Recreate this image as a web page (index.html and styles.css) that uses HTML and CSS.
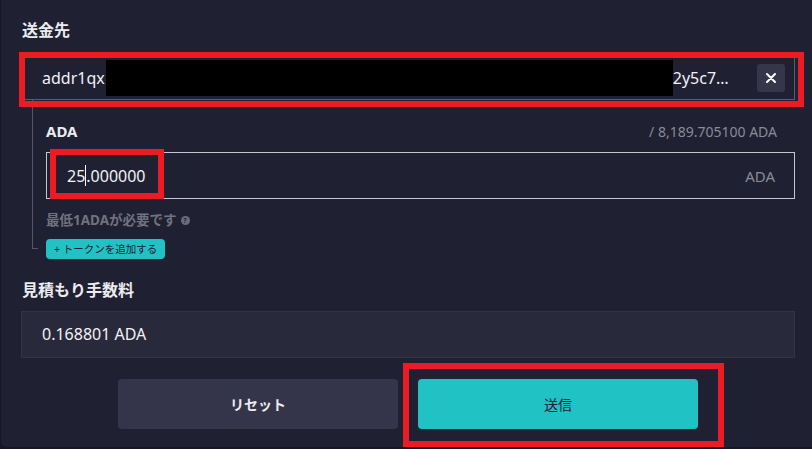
FILE: index.html
```html
<!DOCTYPE html>
<html lang="ja">
<head>
    <meta charset="UTF-8">
    <meta name="viewport" content="width=device-width, initial-scale=1.0">
    <title>送金</title>
    <link rel="stylesheet" href="styles.css">
</head>
<body>

<div class="card">
    <div class="field-label">送金先</div>
    <div class="address-input">
        <div class="address-text">addr1qx<span class="redacted"></span>2y5c7…</div>
        <button class="clear-btn" type="button">
            <svg width="10" height="10" viewBox="0 0 10 10"><path d="M1 1 L9 9 M9 1 L1 9" stroke="#fff" stroke-width="2" stroke-linecap="round"/></svg>
        </button>
    </div>

    <div class="branch">
        <div class="asset-head">
            <span class="asset-name">ADA</span>
            <span class="asset-balance">/ 8,189.705100 ADA</span>
        </div>
        <div class="amount-input">
            <span class="amount-value">25<span class="caret"></span>.000000</span>
            <span class="amount-unit">ADA</span>
        </div>
        <div class="hint">最低1ADAが必要です <span class="help">?</span></div>
        <button class="add-token" type="button">+ トークンを追加する</button>
    </div>

    <div class="field-label fee-label">見積もり手数料</div>
    <div class="fee-box">0.168801 ADA</div>

    <div class="actions">
        <button class="btn btn-reset" type="button">リセット</button>
        <button class="btn btn-send" type="button">送信</button>
    </div>

    <!-- red annotation boxes -->
    <div class="mark mark-address"></div>
    <div class="mark mark-amount"></div>
    <div class="mark mark-send"></div>
</div>

</body>
</html>
```

FILE: styles.css
```css
body {
    margin: 0;
    background-color: #171826;
    font-family: "Noto Sans", "Noto Sans CJK JP", sans-serif;
    color: #ececf0;
}
.card {
    position: relative;
    box-sizing: border-box;
    width: 812px;
    height: 448px;
    padding: 20px 17px 0 20px;
    background-color: #1f2031;
    border-left: 1px solid #171826;
    border-bottom: 1px solid #171826;
    border-bottom-left-radius: 6px;
}
.field-label {
    font-size: 16px;
    font-weight: bold;
    line-height: 20px;
    padding-left: 1px;
}
.address-input {
    display: flex;
    align-items: center;
    justify-content: space-between;
    box-sizing: border-box;
    height: 44px;
    margin-top: 16px;
    padding: 0 9px 0 20px;
    border: 1px solid #5c5d6c;
}
.address-text {
    display: flex;
    align-items: center;
    font-size: 16px;
    color: #f2f2f5;
}
.redacted {
    display: inline-block;
    width: 567px;
    height: 36px;
    margin-left: 1px;
    background-color: #000;
}
.clear-btn {
    display: flex;
    align-items: center;
    justify-content: center;
    width: 28px;
    height: 28px;
    padding: 0;
    border: none;
    border-radius: 3px;
    background-color: #35364a;
}
.branch {
    position: relative;
    margin-left: 11px;
    padding: 21px 0 0 14px;
}
.branch::before {
    content: "";
    position: absolute;
    left: 0;
    top: 0;
    bottom: 10px;
    width: 5px;
    border-left: 1px solid #55566a;
    border-bottom: 1px solid #55566a;
}
.asset-head {
    display: flex;
    justify-content: space-between;
    align-items: center;
    height: 20px;
    padding-right: 18px;
}
.asset-name {
    font-size: 15px;
    font-weight: bold;
}
.asset-balance {
    font-size: 14px;
    color: #8a8b98;
}
.amount-input {
    display: flex;
    justify-content: space-between;
    align-items: center;
    box-sizing: border-box;
    height: 47px;
    margin-top: 11px;
    padding: 0 19px 0 20px;
    border: 1px solid #c6c6cc;
}
.amount-value {
    display: flex;
    align-items: center;
    font-size: 16px;
    color: #f2f2f5;
}
.caret {
    display: inline-block;
    width: 1px;
    height: 21px;
    background-color: #fff;
}
.amount-unit {
    font-size: 15px;
    color: #8a8b98;
}
.hint {
    display: flex;
    align-items: center;
    gap: 4px;
    margin-top: 12px;
    font-size: 13.5px;
    font-weight: bold;
    line-height: 18px;
    color: #71727f;
}
.help {
    display: inline-flex;
    align-items: center;
    justify-content: center;
    width: 9px;
    height: 9px;
    border-radius: 50%;
    background-color: #6c6d7c;
    color: #1f2031;
    font-size: 7px;
    line-height: 9px;
}
.add-token {
    display: block;
    height: 20px;
    margin-top: 10px;
    padding: 0 8px;
    border: none;
    border-radius: 4px;
    background-color: #20c2c3;
    color: #1f2031;
    font-family: "Noto Sans", "Noto Sans CJK JP", sans-serif;
    font-size: 10.5px;
    line-height: 20px;
}
.fee-label {
    margin-top: 21px;
}
.fee-box {
    box-sizing: border-box;
    height: 47px;
    margin-top: 11px;
    padding: 0 20px;
    background-color: #29293c;
    border: 1px solid #323345;
    font-size: 16px;
    line-height: 45px;
    color: #f2f2f5;
}
.actions {
    display: flex;
    justify-content: center;
    gap: 20px;
    margin-top: 21px;
}
.btn {
    width: 280px;
    height: 50px;
    border: none;
    border-radius: 4px;
    font-family: "Noto Sans", "Noto Sans CJK JP", sans-serif;
    font-size: 14px;
    cursor: pointer;
}
.btn-reset {
    background-color: #34354a;
    color: #ececf0;
    font-weight: bold;
}
.btn-send {
    background-color: #20c2c3;
    color: #1f2031;
}
.mark {
    position: absolute;
    box-sizing: border-box;
    border: 6px solid #ed1c24;
}
.mark-address {
    left: 18px;
    top: 52px;
    width: 785px;
    height: 55px;
}
.mark-amount {
    left: 49px;
    top: 149px;
    width: 114px;
    height: 50px;
}
.mark-send {
    left: 402px;
    top: 363px;
    width: 321px;
    height: 84px;
}
```
